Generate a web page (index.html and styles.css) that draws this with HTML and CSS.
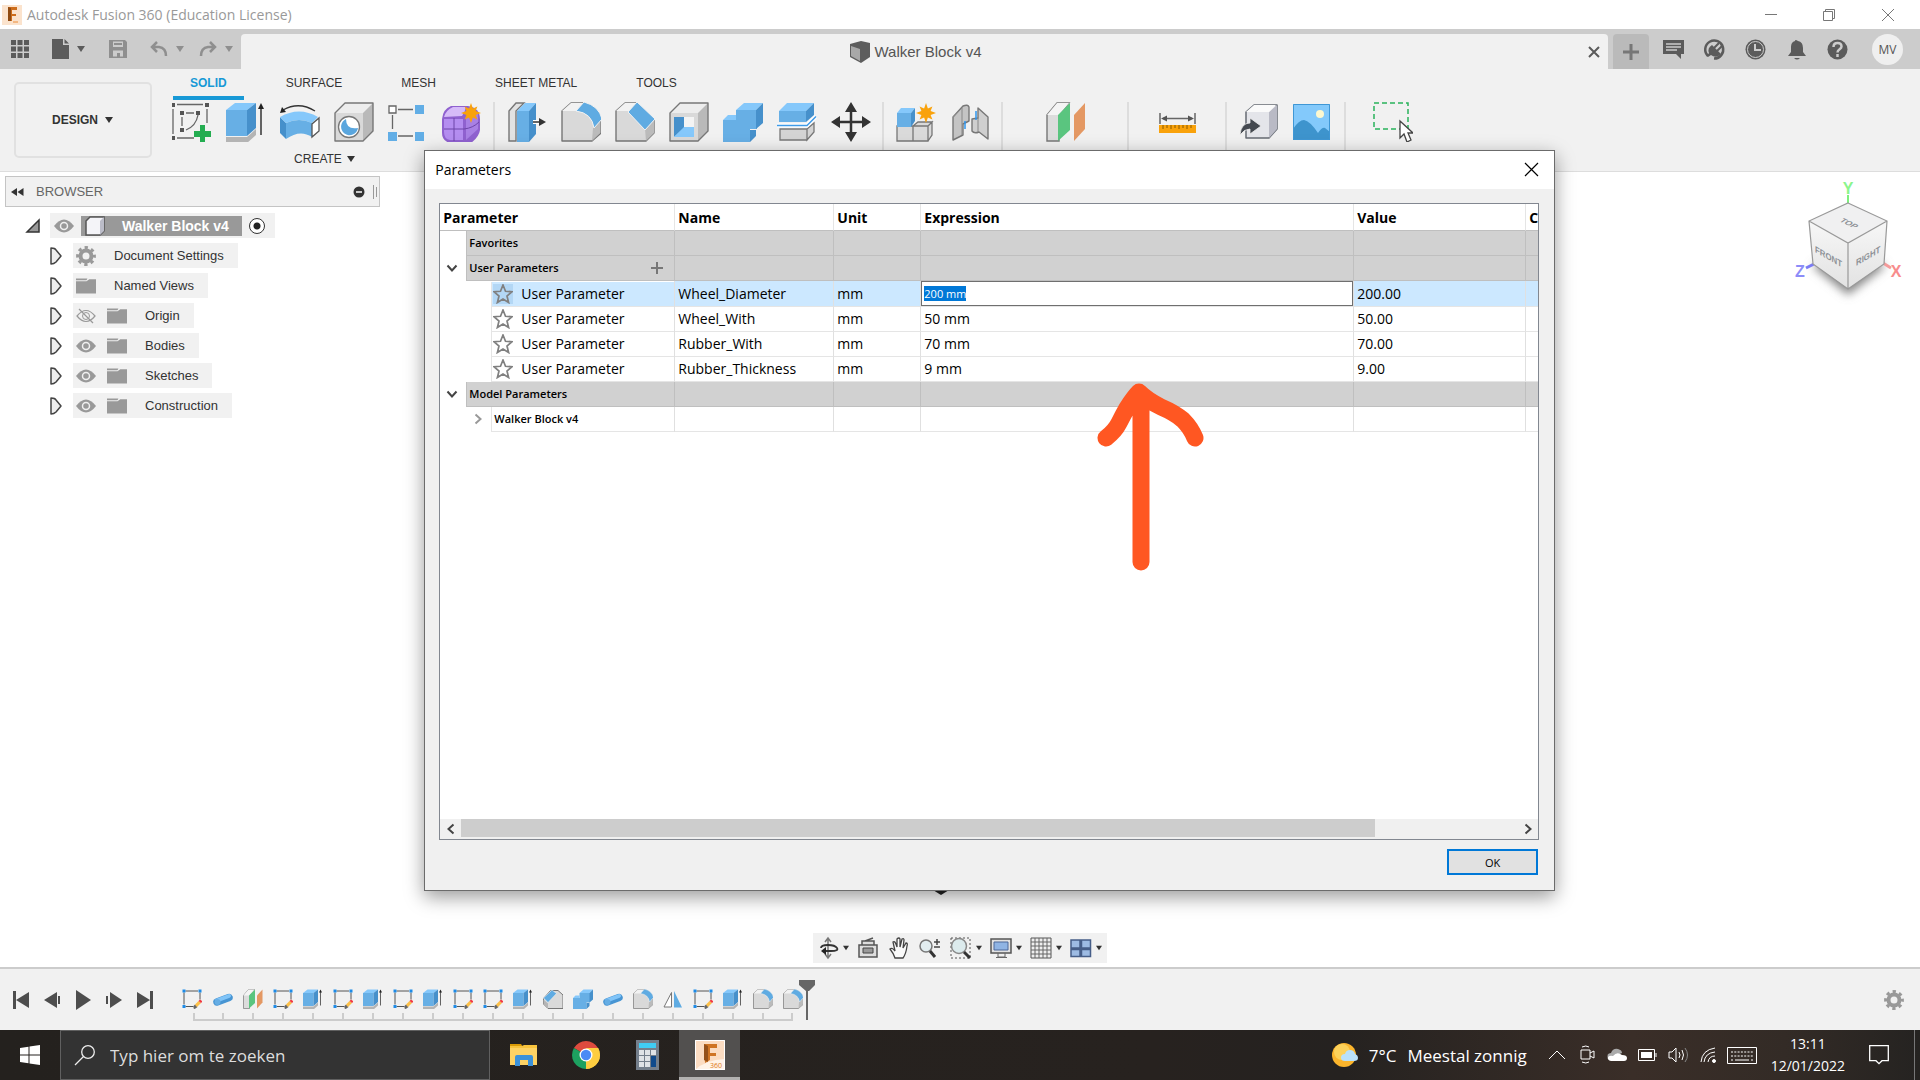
FILE: index.html
```html
<!DOCTYPE html>
<html lang="en">
<head>
  <meta charset="UTF-8" />
  <meta name="viewport" content="width=device-width, initial-scale=1.0"/>
  <title>Autodesk Fusion 360 (Education License)</title>
  <link rel="stylesheet" href="styles.css">
</head>
<body>
  <!-- shared icons -->
  <svg class="defs" aria-hidden="true">
    <symbol id="caret" viewBox="0 0 10 8"><path d="M1 1h8L5 7z" fill="currentColor"/></symbol>
    <symbol id="burst" viewBox="-10 -10 20 20"><path d="M0-10 1.900-4.600 6.400-6.400 4.600-1.900 10 0 4.600 1.900 6.400 6.400 1.900 4.600 0 10-1.900 4.600-6.400 6.400-4.600 1.900-10 0-4.600-1.900-6.400-6.400-1.900-4.600z" fill="#f9a20b"/></symbol>
    <symbol id="sketch-new" viewBox="0 0 40 40">
      <path d="M5 2.500h26M1 7v25M5 36h17M35 7v14M10 15v9M14 11h8M26 13q-2 11-12 15" fill="none" stroke="#666" stroke-width="1.300"/>
      <path d="M-1 1h4v4h-4zM33 1h4v4h-4zM-1 34h4v4h-4zM8 9h4v4H8zM24 9h4v4h-4zM8 26h4v4H8z" fill="#555"/>
      <path d="M28 23h5v6h6v6h-6v6h-5v-6h-6v-6h6z" fill="#24ad51"/>
    </symbol>
    <symbol id="extrude" viewBox="0 0 40 40">
      <path d="M0 35h21l9-8v6l-9 8H0z" fill="#b4b4b4"/>
      <path d="M0 8h21v26H0z" fill="#67afe5"/><path d="M0 8l9-7h21l-9 7z" fill="#85c8fb"/><path d="M21 8l9-7v25l-9 8z" fill="#4690cb"/>
      <path d="M35 6v27" stroke="#333" stroke-width="1.500"/><path d="M32 7l3-6 3 6z" fill="#222"/>
    </symbol>
    <symbol id="revolve" viewBox="0 0 40 40">
      <path d="M0 15l6 6v16l-6-6z" fill="#4690cb"/><path d="M0 15Q19 4 38 15l-6 6Q19 15 6 21z" fill="#85c8fb"/><path d="M6 21q13-6 26 0v14q-12-8-26 2z" fill="#67afe5"/>
      <path d="M32 22l7-6v13l-7 6z" fill="#fff" stroke="#555" stroke-width="1.300"/>
      <path d="M35 9Q19-1 3 8" fill="none" stroke="#333" stroke-width="1.300"/><path d="M0 11l2-6 4 5z" fill="#222"/>
    </symbol>
    <symbol id="cube-gray" viewBox="0 0 40 40">
      <path d="M1 11h28v28H1z" fill="#d9d9d9"/><path d="M1 11l10-10h28L29 11z" fill="#ededed"/><path d="M29 11L39 1v28L29 39z" fill="#b9b9b9"/>
      <path d="M1 11l10-10h28v28L29 39H1z" fill="none" stroke="#777" stroke-width="1.400" stroke-linejoin="round"/>
    </symbol>
    <symbol id="hole" viewBox="0 0 40 40">
      <use href="#cube-gray"/><circle cx="15" cy="25" r="10.500" fill="#fff" stroke="#777" stroke-width="1.300"/><path d="M12 17a8.500 8.500 0 1 0 12 9q-12 2-12-9z" fill="#5aa6de"/>
    </symbol>
    <symbol id="pattern" viewBox="0 0 40 40">
      <path d="M10 7.500h15M4.500 13v14M10 34h15" stroke="#666" stroke-width="1.300"/>
      <path d="M1 4h7v7H1z" fill="#fff" stroke="#666" stroke-width="1.300"/>
      <path d="M27 3h9v9h-9zM0 30h9v9H0zM27 30h9v9h-9z" fill="#62aee6"/>
    </symbol>
    <symbol id="form" viewBox="0 0 40 40">
      <path d="M0 17Q1 7 9 4h17q12 2 12 13v11q-1 7-9 13H8Q0 39 0 31z" fill="#8f61cf"/>
      <path d="M2 15Q4 8 11 5h13q-1 5-4 9z" fill="#d6bbf8"/><path d="M2 17h19v21H8q-6-1-6-8z" fill="#b48df0"/><path d="M24 16l12-5v16l-12 11z" fill="#a880e4"/>
      <path d="M12 16v23M2 27h20q9-1 15-7" stroke="#6d45a8" stroke-width="1" fill="none"/>
      <use href="#burst" x="19" y="1" width="20" height="20"/>
    </symbol>
    <symbol id="presspull" viewBox="0 0 40 40">
      <path d="M2 9l7-8h8L9 9v30H2z" fill="#e2e2e2" stroke="#777" stroke-width="1.400"/>
      <path d="M10 9h12v31H10z" fill="#67afe5"/><path d="M10 9l8-8h11l-7 8z" fill="#85c8fb"/><path d="M22 9l7-8v31l-7 8z" fill="#4690cb"/>
      <path d="M26 20h8" stroke="#fff" stroke-width="4"/><path d="M26 20h8" stroke="#333" stroke-width="1.500"/><path d="M32 16l7 4-7 4z" fill="#333"/>
    </symbol>
    <symbol id="fillet" viewBox="0 0 40 40">
      <path d="M1 9l9-8h12q16 4 18 17v13l-9 8H1z" fill="#d9d9d9" stroke="#777" stroke-width="1.400" stroke-linejoin="round"/>
      <path d="M1 9l9-8h12l-6 8z" fill="#f2f2f2"/><path d="M32 26l7-8v13l-8 8z" fill="#bbb"/>
      <path d="M15 9l8-9q15 4 18 17l-8 9Q31 11 15 9z" fill="#5fabe2" stroke="#f2f2f2" stroke-width="1"/>
    </symbol>
    <symbol id="chamfer" viewBox="0 0 40 40">
      <path d="M1 9l9-8h12l17 17v13l-8 8H1z" fill="#d9d9d9" stroke="#777" stroke-width="1.400" stroke-linejoin="round"/>
      <path d="M1 9l9-8h12l-8 8z" fill="#f2f2f2"/><path d="M30 27l9-9v13l-8 8z" fill="#bbb"/>
      <path d="M13 10l9-10 18 17-10 11z" fill="#5fabe2" stroke="#f2f2f2" stroke-width="1"/>
    </symbol>
    <symbol id="draft" viewBox="0 0 40 40">
      <path d="M15 3h15l10 9v27H10l-9-9V19z" fill="#dadada" stroke="#777" stroke-width="2" stroke-linejoin="round"/>
      <path d="M1 21l9 8v10l-9-9z" fill="#b5b5b5"/><path d="M1 18L18 2l9 7L10 27z" fill="#5fabe2" stroke="#f2f2f2"/>
    </symbol>
    <symbol id="shell" viewBox="0 0 40 40">
      <use href="#cube-gray"/><path d="M5 15h20v20H5z" fill="#e9e9e9"/><path d="M5 15h10v11L5 35z" fill="#4690cb"/><path d="M5 35l10-10h10v10z" fill="#85c8fb"/><path d="M15 15h10v10H15z" fill="#f4f4f4"/>
    </symbol>
    <symbol id="combine" viewBox="0 0 40 40">
      <path d="M0 18h13V8h21v19h-7v13H0z" fill="#67afe5"/><path d="M0 18l5-5h8v5zM13 8l8-7h19l-7 7z" fill="#85c8fb"/><path d="M33 8l7-7v20l-7 6zM27 28h6v6l-6 6z" fill="#4690cb"/>
    </symbol>
    <symbol id="split" viewBox="0 0 40 40">
      <path d="M3 27h27v11H3zM30 27l7-6v9l-7 8z" fill="#d4d4d4" stroke="#777" stroke-width="1.300"/>
      <path d="M2 9h27v11H2z" fill="#67afe5"/><path d="M2 9l8-8h27l-8 8z" fill="#85c8fb"/><path d="M29 9l8-8v12l-8 7z" fill="#4690cb"/>
      <path d="M0 23.500h30l9-9" fill="none" stroke="#fff" stroke-width="4"/><path d="M0 23.500h30l9-9" fill="none" stroke="#3f9be8" stroke-width="1.500"/>
    </symbol>
    <symbol id="move" viewBox="0 0 40 40">
      <path d="M20 6v28M6 20h28" stroke="#333" stroke-width="2.500"/>
      <path d="M20 0l6 10H14zM20 40l6-10H14zM0 20l9-6v12zM40 20l-9-6v12z" fill="#333"/>
    </symbol>
    <symbol id="component" viewBox="0 0 40 40">
      <path d="M1 24h16v15H1zM17 24l5-4h14l-4 4v15H17M17 24h15l4-4v13l-4 6" fill="#dadada" stroke="#777" stroke-width="1.300"/>
      <path d="M1 11h14v14H1z" fill="#67afe5"/><path d="M1 11l4-5h14l-4 5z" fill="#85c8fb"/><path d="M15 11l4-5v13l-4 6z" fill="#4690cb"/>
      <use href="#burst" x="20" y="1" width="20" height="20"/>
    </symbol>
    <symbol id="joint" viewBox="0 0 40 40">
      <path d="M3 15L13 4q5-2 6 1v14l-6 3v11L3 38z" fill="#c4c4c4" stroke="#777" stroke-width="1.400" stroke-linejoin="round"/>
      <path d="M12 6v27M3 15l9-9" stroke="#888" fill="none"/>
      <path d="M38 37l-9-7q-5 2-7-1V17l6-1V6l10 9z" fill="#cfcfcf" stroke="#777" stroke-width="1.400" stroke-linejoin="round"/><path d="M28 16v14" stroke="#888"/>
      <path d="M15 19v8M26 9v9" stroke="#2f96ee" stroke-width="1.500"/>
    </symbol>
    <symbol id="plane" viewBox="0 0 40 40">
      <path d="M1 13L11 1h12L13 13v26H1z" fill="#dcdcdc" stroke="#777" stroke-width="1.400"/><path d="M1 13L11 1h12L13 13z" fill="#f4f4f4"/>
      <path d="M12 13L24 1v27L12 39z" fill="#5ac57f"/><path d="M28 13L39 1v26L28 39z" fill="#e49863"/>
    </symbol>
    <symbol id="measure" viewBox="0 0 40 40">
      <path d="M3 11v11M38 11v11M6 16.500h29" stroke="#666" stroke-width="1.500"/><path d="M4 16.500l6-3v6zM37 16.500l-6-3v6z" fill="#555"/>
      <path d="M2 23h37v8H2z" fill="#f9a20b"/><path d="M6 23v4M10 23v3M14 23v4M18 23v3M22 23v4M26 23v3M30 23v4M34 23v3" stroke="#8a5a00"/>
    </symbol>
    <symbol id="insert" viewBox="0 0 40 40">
      <path d="M7 10l8-7h23v24l-8 9H7z" fill="#e4e5ea" stroke="#666b73" stroke-width="1.500" stroke-linejoin="round"/><path d="M30 10l8-7v24l-8 9z" fill="#b9bac5"/><path d="M7 10l8-7h22l-7 7z" fill="#fafafa"/>
      <path d="M1 33q1-12 10-12v-5l11 8-11 8v-5q-6 0-10 6z" fill="#444950" stroke="#eee" stroke-width=".8"/>
    </symbol>
    <symbol id="picture" viewBox="0 0 40 40">
      <path d="M0 2h37v36H0z" fill="#83c9fb"/><path d="M0 27q6-9 11-9 6 1 14 13 4-6 7-5l5 4v8H0z" fill="#3e94cd"/><circle cx="27" cy="12" r="4" fill="#fdf8cf"/><path d="M.5 2.500h36v35H.5z" fill="none" stroke="#3f97d5"/>
    </symbol>
    <symbol id="select" viewBox="0 0 40 40">
      <path d="M1 1h34v26H1z" fill="none" stroke="#29b25b" stroke-width="1.500" stroke-dasharray="5 3"/>
      <path d="M27 19v17l4-4 3 8 4-2-3-7h5z" fill="#fff" stroke="#444" stroke-width="1.300"/>
    </symbol>
    <symbol id="sketch" viewBox="0 0 40 40">
      <path d="M7 4h25M4 7v24M36 7v14M7 35h16" stroke="#555" stroke-width="2"/>
      <path d="M1 1h6v6H1zM33 1h6v6h-6zM1 32h6v6H1z" fill="#1c8be8"/><path d="M23 34l3-3 5 5-4 3q-3 2-4-1z" fill="#666"/>
      <path d="M26 31l7-7 5 4-8 8z" fill="#fcc04a"/><path d="M33 24l3-3 5 4-3 3z" fill="#f03a42"/>
    </symbol>
    <symbol id="cylinder" viewBox="0 0 40 40">
      <path d="M8 26L32 17" stroke="#4795d3" stroke-width="15" stroke-linecap="round"/><path d="M8 23L32 14" stroke="#80c4f8" stroke-width="8" stroke-linecap="round"/><circle cx="9" cy="26" r="6" fill="#65ade4"/>
    </symbol>
    <symbol id="mirror" viewBox="0 0 40 40"><path d="M2 36L17 7v29z" fill="#fff" stroke="#777" stroke-width="2"/><path d="M22 4l16 33H22z" fill="#5fabe2"/></symbol>
    <symbol id="gear" viewBox="0 0 20 20">
      <circle cx="10" cy="10" r="5.500" fill="none" stroke="#999" stroke-width="4"/><circle cx="10" cy="10" r="8.400" fill="none" stroke="#999" stroke-width="3" stroke-dasharray="3.300 3.297" stroke-dashoffset="1.650"/>
    </symbol>
    <symbol id="eye" viewBox="0 0 20 20"><path d="M0 10q10-13 20 0-10 13-20 0z" fill="#999"/><circle cx="10" cy="10" r="3.500" fill="none" stroke="#f0f0f0" stroke-width="1.500"/></symbol>
    <symbol id="eye-off" viewBox="0 0 20 20"><path d="M1 10q9-11 18 0-9 11-18 0z" fill="none" stroke="#999" stroke-width="1.200"/><circle cx="10" cy="10" r="3.500" fill="none" stroke="#999"/><path d="M3 3l14 14" stroke="#999" stroke-width="1.200"/></symbol>
    <symbol id="folder" viewBox="0 0 21 20"><path d="M0 2h12l-1 2H0zM0 5h11l3-2h7v15H0z" fill="#999"/></symbol>
    <symbol id="expand" viewBox="0 0 12 18"><path d="M1 1q4 0 5 2l5 6-5 6q-2 2-5 2z" fill="#eee" stroke="#444" stroke-width="1.500" stroke-linejoin="round"/></symbol>
    <symbol id="star" viewBox="0 0 20 20"><path d="M10 1l2.500 6.300 6.500.4-5 4.300 1.600 6.500L10 15l-5.600 3.500L6 12 1 7.700l6.500-.4z" fill="none" stroke="#808080" stroke-width="1.700"/></symbol>
    <symbol id="chevron" viewBox="0 0 12 12"><path d="M1.500 3.500L6 8.500l4.500-5" fill="none" stroke="currentColor" stroke-width="2"/></symbol>
  </svg>

  <header class="titlebar">
    <svg class="app-icon" viewBox="0 0 20 20"><path d="M0 0h20v20H0z" fill="#fbe3cd"/><path d="M6 2h9v3h-5v4h4v2h-4v5H6z" fill="#cd6d1b"/><path d="M6 2l3 1v13H6z" fill="#8f4b13"/><path d="M11 17h5" stroke="#f0a868" stroke-width="1.500"/></svg>
    <span class="app-title">Autodesk Fusion 360 (Education License)</span>
    <div class="window-buttons">
      <button aria-label="Minimize"><svg viewBox="0 0 12 12"><path d="M0 5.500h12"/></svg></button>
      <button aria-label="Restore"><svg viewBox="0 0 12 12"><path d="M.5 2.500h9v9h-9zM2.500 2V.5h9v9H10"/></svg></button>
      <button aria-label="Close"><svg viewBox="0 0 12 12"><path d="M0 0l12 12M12 0L0 12"/></svg></button>
    </div>
  </header>

  <div class="tabbar">
    <div class="quick">
      <button aria-label="Data panel"><svg width="18" height="18" viewBox="0 0 18 18"><path d="M0 0h5v5H0zM6.500 0h5v5h-5zM13 0h5v5h-5zM0 6.500h5v5H0zM6.500 6.500h5v5h-5zM13 6.500h5v5h-5zM0 13h5v5H0zM6.500 13h5v5h-5zM13 13h5v5h-5z" fill="#5b5b5b"/></svg></button>
      <button class="menu" aria-label="File"><svg width="17" height="20" viewBox="0 0 17 20"><path d="M0 0h11v6h6v14H0zM12.500 0L17 4.500h-4.500z" fill="#5b5b5b"/></svg><svg class="caret"><use href="#caret"/></svg></button>
      <button class="dim" aria-label="Save"><svg width="18" height="18" viewBox="0 0 18 18"><path d="M0 0h16l2 2v16H0zM4 1.500V7h10V1.500zM4 10.500v6h10v-6z" fill-rule="evenodd" fill="#8f8f8f"/><path d="M5 3h8v2H5zM8 13h3v4H8z" fill="#8f8f8f"/></svg></button>
      <button class="menu dim" aria-label="Undo"><svg width="18" height="18" viewBox="0 0 18 18"><path d="M7 2L2 7l5 5M2 7h7q7 1 7 9" fill="none" stroke="#8f8f8f" stroke-width="2.500"/></svg><svg class="caret"><use href="#caret"/></svg></button>
      <button class="menu dim" aria-label="Redo"><svg width="18" height="18" viewBox="0 0 18 18"><path d="M11 2l5 5-5 5M16 7H9q-7 1-7 9" fill="none" stroke="#8f8f8f" stroke-width="2.500"/></svg><svg class="caret"><use href="#caret"/></svg></button>
    </div>
    <div class="doc-tab">
      <div class="doc-name">
        <svg width="20" height="22" viewBox="0 0 20 22"><path d="M0 3l11-3 9 2v14l-9 6-11-6z" fill="#5d5d5d"/><path d="M1 5l9 3v12l-9-5z" fill="#a8a8a8"/></svg>
        <span>Walker Block v4</span>
      </div>
      <button aria-label="Close document"><svg width="12" height="12" viewBox="0 0 12 12"><path d="M1 1l10 10M11 1L1 11" stroke="#5b5b5b" stroke-width="2"/></svg></button>
    </div>
    <button class="new-tab" aria-label="New design"><svg width="16" height="16" viewBox="0 0 16 16"><path d="M8 0v16M0 8h16" stroke="#777" stroke-width="3"/></svg></button>
    <div class="account">
      <button aria-label="Comments"><svg viewBox="0 0 21 21"><path d="M0 1h21v14h-3v5l-5-5H0z" fill="#5b5b5b"/><path d="M3 5h15M3 8h15M3 11h11" stroke="#ccc" stroke-width="1.500"/></svg></button>
      <button aria-label="Extensions"><svg viewBox="0 0 21 21"><path d="M4 17a9 9 0 1 1 6 2.500" fill="none" stroke="#5b5b5b" stroke-width="2.500"/><path d="M8 6l9 9q-5 5-10 1l-3 2-1-1 2-3Q3 9 8 6z" fill="#5b5b5b"/><path d="M10 9l5-5M13 12l5-5" stroke="#5b5b5b" stroke-width="2"/></svg></button>
      <button aria-label="Job status"><svg viewBox="0 0 21 21"><circle cx="10.500" cy="10.500" r="10" fill="#5b5b5b"/><circle cx="10.500" cy="10.500" r="8" fill="none" stroke="#ccc"/><path d="M10 5v6h6" fill="none" stroke="#ccc" stroke-width="2"/></svg></button>
      <button aria-label="Notifications"><svg viewBox="0 0 21 21"><path d="M9 2q0-2 3 0 5 1 5 7v4l3 4H2l3-4V8q0-5 4-6zM8 19h6q-3 3-6 0z" fill="#5b5b5b"/></svg></button>
      <button aria-label="Help"><svg viewBox="0 0 21 21"><circle cx="10.500" cy="10.500" r="10" fill="#5b5b5b"/><path d="M6.500 8q0-4 4-4t4 3.500c0 3-4 2.500-4 6M10.500 15v3" fill="none" stroke="#ccc" stroke-width="2.500"/></svg></button>
      <button class="avatar">MV</button>
    </div>
  </div>

  <section class="ribbon">
    <button class="workspace">DESIGN <svg class="caret"><use href="#caret"/></svg></button>
    <div class="ribbon-main">
      <nav class="ribbon-tabs">
        <button class="active">SOLID</button>
        <button>SURFACE</button>
        <button>MESH</button>
        <button>SHEET METAL</button>
        <button>TOOLS</button>
      </nav>
      <div class="tools">
        <div class="group">
          <div class="icons">
            <button aria-label="Create sketch"><svg><use href="#sketch-new"/></svg></button>
            <button aria-label="Extrude"><svg><use href="#extrude"/></svg></button>
            <button aria-label="Revolve"><svg><use href="#revolve"/></svg></button>
            <button aria-label="Hole"><svg><use href="#hole"/></svg></button>
            <button aria-label="Pattern"><svg><use href="#pattern"/></svg></button>
            <button aria-label="Create form"><svg><use href="#form"/></svg></button>
          </div>
          <button class="group-label">CREATE <svg class="caret"><use href="#caret"/></svg></button>
        </div>
        <div class="group">
          <div class="icons">
            <button aria-label="Press pull"><svg><use href="#presspull"/></svg></button>
            <button aria-label="Fillet"><svg><use href="#fillet"/></svg></button>
            <button aria-label="Chamfer"><svg><use href="#chamfer"/></svg></button>
            <button aria-label="Shell"><svg><use href="#shell"/></svg></button>
            <button aria-label="Combine"><svg><use href="#combine"/></svg></button>
            <button aria-label="Split body"><svg><use href="#split"/></svg></button>
            <button aria-label="Move"><svg><use href="#move"/></svg></button>
          </div>
        </div>
        <div class="group">
          <div class="icons">
            <button aria-label="New component"><svg><use href="#component"/></svg></button>
            <button aria-label="Joint"><svg><use href="#joint"/></svg></button>
          </div>
        </div>
        <div class="group wide">
          <div class="icons"><button aria-label="Offset plane"><svg><use href="#plane"/></svg></button></div>
        </div>
        <div class="group mid">
          <div class="icons"><button aria-label="Measure"><svg><use href="#measure"/></svg></button></div>
        </div>
        <div class="group">
          <div class="icons">
            <button aria-label="Insert derive"><svg><use href="#insert"/></svg></button>
            <button aria-label="Canvas"><svg><use href="#picture"/></svg></button>
          </div>
        </div>
        <div class="group mid last">
          <div class="icons"><button aria-label="Select"><svg><use href="#select"/></svg></button></div>
        </div>
      </div>
    </div>
  </section>

  <main class="canvas">
    <div class="canvas-top">
      <aside class="browser">
        <div class="browser-head">
          <svg width="13" height="8" viewBox="0 0 13 8"><path d="M6 0v8L0 4zM12.500 0v8l-6-4z" fill="#333"/></svg>
          <span>BROWSER</span>
          <svg width="24" height="14" viewBox="0 0 24 14"><circle cx="6" cy="7" r="5.500" fill="#333"/><path d="M3 7h6" stroke="#fff" stroke-width="1.500"/><path d="M20.500 0v14M23.500 2v10" stroke="#999"/></svg>
        </div>
        <div class="root-row">
          <svg width="14" height="14" viewBox="0 0 14 14"><path d="M13 1v12H1z" fill="#999" stroke="#333" stroke-width="1.500"/></svg>
          <div class="row-box root-box">
            <svg class="ic"><use href="#eye"/></svg>
            <span class="root-name">
              <svg width="20" height="20" viewBox="0 0 20 20"><path d="M1 5l4-4h14v14l-4 4H1z" fill="#f4f4f8" stroke="#555" stroke-width="1.500"/><path d="M15 5l4-4v14l-4 4z" fill="#bbbcc8"/></svg>
              Walker Block v4
            </span>
            <input type="radio" name="active-component" aria-label="Activate component" checked>
          </div>
        </div>
        <ul class="tree">
          <li><svg class="twist"><use href="#expand"/></svg><div class="row-box"><svg class="ic"><use href="#gear"/></svg><span>Document Settings</span></div></li>
          <li><svg class="twist"><use href="#expand"/></svg><div class="row-box"><svg class="ic"><use href="#folder"/></svg><span>Named Views</span></div></li>
          <li><svg class="twist"><use href="#expand"/></svg><div class="row-box"><svg class="ic"><use href="#eye-off"/></svg><svg class="ic"><use href="#folder"/></svg><span>Origin</span></div></li>
          <li><svg class="twist"><use href="#expand"/></svg><div class="row-box"><svg class="ic"><use href="#eye"/></svg><svg class="ic"><use href="#folder"/></svg><span>Bodies</span></div></li>
          <li><svg class="twist"><use href="#expand"/></svg><div class="row-box"><svg class="ic"><use href="#eye"/></svg><svg class="ic"><use href="#folder"/></svg><span>Sketches</span></div></li>
          <li><svg class="twist"><use href="#expand"/></svg><div class="row-box"><svg class="ic"><use href="#eye"/></svg><svg class="ic"><use href="#folder"/></svg><span>Construction</span></div></li>
        </ul>
      </aside>

      <svg class="viewcube" viewBox="0 0 120 134">
        <defs>
          <filter id="soft" x="-30%" y="-30%" width="160%" height="160%"><feGaussianBlur stdDeviation="5"/></filter>
          <linearGradient id="face" x1="0" y1="0" x2="0" y2="1"><stop offset="0" stop-color="#f7f7f7"/><stop offset="1" stop-color="#e2e2e2"/></linearGradient>
        </defs>
        <path d="M24 90l36-16 38 16-38 29z" fill="#888" filter="url(#soft)"/>
        <path d="M60 19v8" stroke="#7df07d" stroke-width="2"/><path d="M18 92l8-4" stroke="#7a7af5" stroke-width="3"/><path d="M95 87l8 5" stroke="#f59a9a" stroke-width="3"/>
        <path d="M60 27l39 18-39 22-39-22z" fill="#f0f0f1"/>
        <path d="M21 45l39 22v46L25 88z" fill="url(#face)"/><path d="M99 45L60 67v46l36-25z" fill="url(#face)"/>
        <path d="M60 27l39 18-3 43-36 25-35-25-4-43zM21 45l39 22 39-22M60 67v46" fill="none" stroke="#999" stroke-width="1.200"/>
        <g class="cube-text">
          <text transform="matrix(.85 .42 -.75 .5 51 45)">TOP</text>
          <text transform="matrix(.87 .5 0 1 27 76)">FRONT</text>
          <text transform="matrix(.87 -.5 0 1 68 90)">RIGHT</text>
        </g>
        <g class="axis">
          <text x="60" y="18" fill="#8bf58b">Y</text><text x="12" y="101" fill="#8c8cf8">Z</text><text x="108" y="101" fill="#f88c8c">X</text>
        </g>
      </svg>
    </div>

    <div class="navbar">
      <button aria-label="Orbit"><svg viewBox="0 0 22 22"><path d="M11 1v20M8 5l3-4 3 4M8 17l3 4 3-4" fill="none" stroke="#777" stroke-width="1.500"/><path d="M4 11q0-3 7-3t9 3-6 3H6" fill="none" stroke="#333" stroke-width="1.800"/><path d="M9 10v8l-5-4z" fill="#222"/></svg></button><svg class="caret"><use href="#caret"/></svg>
      <button aria-label="Look at"><svg viewBox="0 0 22 22"><path d="M2 8h18v12H2zM5 8V4h12v4M8 4l8-3" fill="#ddd" stroke="#555" stroke-width="1.500"/><path d="M6 11h10v5H6z" fill="#999" stroke="#444"/></svg></button>
      <button aria-label="Pan"><svg viewBox="0 0 22 22"><path d="M7 21q-1-4-5-9 2-2 5 2L5 5q2-2 4 5V2q2-2 3 0v8l2-8q2-1 2 1l-1 8 3-5q2 0 1 3-1 8-4 12z" fill="#fafafa" stroke="#444" stroke-width="1.300"/></svg></button>
      <button aria-label="Zoom"><svg viewBox="0 0 22 22"><circle cx="7" cy="9" r="6" fill="#e2edf0" stroke="#777" stroke-width="1.500"/><path d="M11 14l5 6" stroke="#333" stroke-width="3"/><path d="M18 2v6M15 5h6M15 10h6" stroke="#444" stroke-width="1.500"/></svg></button>
      <button aria-label="Fit"><svg viewBox="0 0 22 22"><path d="M1 1h19v20H1z" fill="none" stroke="#555" stroke-dasharray="2 2"/><circle cx="9" cy="9" r="7.500" fill="#dcebed" stroke="#888" stroke-width="1.500"/><path d="M14 15l6 6" stroke="#333" stroke-width="3"/></svg></button><svg class="caret"><use href="#caret"/></svg>
      <button aria-label="Display settings"><svg viewBox="0 0 22 22"><path d="M1 2h20v14H1z" fill="#e2e2e2" stroke="#555" stroke-width="1.500"/><path d="M4 5h14v8H4z" fill="#8fb4e4" stroke="#4c689a"/><path d="M8 16v4h7v-4M6 20.500h11" stroke="#666" fill="none"/></svg></button><svg class="caret"><use href="#caret"/></svg>
      <button aria-label="Grid and snaps"><svg viewBox="0 0 22 22"><path d="M1 1h20v20H1z" fill="#eee" stroke="#555"/><path d="M5 1v20M9 1v20M13 1v20M17 1v20M1 5h20M1 9h20M1 13h20M1 17h20" stroke="#666"/></svg></button><svg class="caret"><use href="#caret"/></svg>
      <button aria-label="Viewports"><svg viewBox="0 0 22 22"><path d="M1 3h9v8H1zM11.500 3h9v8h-9zM1 12.500h9v7H1zM11.500 12.500h9v7h-9z" fill="#9dbbe3" stroke="#465e88" stroke-width="1.500"/></svg></button><svg class="caret"><use href="#caret"/></svg>
    </div>
  </main>

  <section class="timeline">
    <div class="playback">
      <button aria-label="Go to start"><svg viewBox="0 0 20 20"><path d="M2 1h3v18H2zM18 2v16L5 10z"/></svg></button>
      <button aria-label="Step back"><svg viewBox="0 0 20 20"><path d="M15 2v16L2 10zM16 6h2v8h-2z"/></svg></button>
      <button aria-label="Play"><svg viewBox="0 0 20 20"><path d="M3 0l15 10L3 20z"/></svg></button>
      <button aria-label="Step forward"><svg viewBox="0 0 20 20"><path d="M6 2v16l12-8zM2 6h2v8H2z"/></svg></button>
      <button aria-label="Go to end"><svg viewBox="0 0 20 20"><path d="M15 1h3v18h-3zM2 2v16l13-8z"/></svg></button>
    </div>
    <ol class="history" id="history"></ol>
    <svg class="marker" viewBox="0 0 16 40"><path d="M0 0h16v5l-6 6H9v29H7V11L0 5z" fill="#666"/></svg>
    <button class="timeline-settings" aria-label="Timeline settings"><svg width="20" height="20"><use href="#gear"/></svg></button>
  </section>

  <footer class="taskbar">
    <button class="start" aria-label="Start"><svg width="20" height="20" viewBox="0 0 20 20"><path d="M0 3l8.500-1.200v7.700H0zM9.500 1.600L20 0v9.500H9.500zM0 10.500h8.500v7.700L0 17zM9.500 10.500H20V20L9.500 18.400z" fill="#fff"/></svg></button>
    <label class="search">
      <svg width="20" height="20" viewBox="0 0 20 20"><circle cx="13" cy="7" r="6.300" fill="none" stroke="#eee" stroke-width="1.300"/><path d="M8.500 11.500L0 20" stroke="#eee" stroke-width="1.300"/></svg>
      <input type="text" placeholder="Typ hier om te zoeken" aria-label="Typ hier om te zoeken">
    </label>
    <div class="apps">
      <button aria-label="File Explorer"><svg width="28" height="24" viewBox="0 0 28 24"><path d="M0 1h11l2 3H0z" fill="#d99a06"/><path d="M0 3h27v19H0z" fill="#fdd264"/><path d="M0 3h12l2-1h13v3H0z" fill="#f8c33c"/><path d="M5 14q0-2 2-2h14q2 0 2 2v9h-5v-6H10v6H5z" fill="#3b91d9"/></svg></button>
      <button aria-label="Chrome"><svg width="28" height="28" viewBox="0 0 28 28"><path d="M14 14L1.900 7A14 14 0 0 1 26.100 7z" fill="#dd4b3e"/><path d="M14 14l12.100-7A14 14 0 0 1 14 28z" fill="#fecd40"/><path d="M14 14v14A14 14 0 0 1 1.900 7z" fill="#1da160"/><path d="M14 7h12.100A14 14 0 0 1 14 28l6-10z" fill="#fecd40"/><circle cx="14" cy="14" r="6.500" fill="#fff"/><circle cx="14" cy="14" r="5.200" fill="#4c8bf5"/></svg></button>
      <button aria-label="Calculator"><svg width="23" height="30" viewBox="0 0 23 30"><path d="M0 0h23v30H0z" fill="#747f8c"/><path d="M3 3h17v5H3z" fill="#40cdf5"/><path d="M3 10h5v5H3zM9 10h5v5H9zM15 10h5v5h-5zM3 16h5v5H3zM9 16h5v5H9zM3 22h5v5H3zM9 22h5v5H9z" fill="#dfe3e7"/><path d="M15 16h5v11h-5z" fill="#0f4a8c"/></svg></button>
      <button class="running" aria-label="Fusion 360"><svg width="30" height="30" viewBox="0 0 30 30"><path d="M0 0h30v30H0z" fill="#fbdcc2"/><path d="M0 30q10-10 30-11v11z" fill="#fff3e8"/><path d="M9 4h13v4h-7v5h6v3h-6v4l-5 3z" fill="#cf7424"/><path d="M9 4l4 2v16l-4-2z" fill="#94501a"/><path d="M.5.5h29v29H.5z" fill="none" stroke="#fff"/><text x="15" y="28" class="app-360">360</text></svg></button>
    </div>
    <div class="tray">
      <button class="weather">
        <svg width="26" height="24" viewBox="0 0 26 24"><circle cx="12" cy="12" r="12" fill="#fbb52c"/><circle cx="10" cy="9" r="8" fill="#fdd25a"/><path d="M13 18q-4 0-4-3.500T13 11q1-4 5-4t5 4q3 1 3 4t-4 3z" fill="#b9e1fa"/></svg>
        <span>7°C</span><span>Meestal zonnig</span>
      </button>
      <div class="tray-icons">
        <svg width="16" height="20" viewBox="0 0 16 20"><path d="M0 14l8-8 8 8"/></svg>
        <svg width="15" height="20" viewBox="0 0 15 20"><path d="M1 5h9v9H1zM10 8l4-2v7l-4-2M2 2q4-2 7 0M2 17q4 2 7 0"/></svg>
        <svg width="21" height="20" viewBox="0 0 21 20"><path d="M2 14Q0 8 5 8q2-5 7-4 4 1 4 4z" fill="#aaa" stroke="none"/><path d="M5 16q-4-1-3-4 2-2 5-1 4-5 9-1 5 0 5 3t-3 3z" fill="#fff" stroke="none"/></svg>
        <svg width="19" height="20" viewBox="0 0 19 20"><path d="M.5 4.500h16v11H.5zM18 8v4"/><path d="M3 7h11v6H3z" fill="#fff" stroke="none"/></svg>
        <svg width="21" height="20" viewBox="0 0 21 20"><path d="M1 7h3l4-4v14l-4-4H1zM11 7q2 3 0 6M14 5q3 5 0 10"/><path d="M17 3q5 7 0 14" stroke="#888"/></svg>
        <svg width="16" height="20" viewBox="0 0 16 20"><path d="M1 17Q2 5 15 3M4 17Q5 8 15 7M8 17q1-6 7-6"/><circle cx="14" cy="16" r="1.500" fill="#fff"/></svg>
        <svg width="30" height="20" viewBox="0 0 30 20"><path d="M.5 2.500h29v16H.5zM8 15h14M4 15h2M24 15h2"/><path d="M4 7h22M4 11h22" stroke-dasharray="2 1.300"/></svg>
      </div>
      <div class="clock"><span>13:11</span><span>12/01/2022</span></div>
      <button class="notify" aria-label="Action center"><svg width="20" height="20" viewBox="0 0 20 20"><path d="M.7.7h18.600v15H13l-3 3-3-3H.7z" fill="none" stroke="#fff" stroke-width="1.300"/></svg></button>
    </div>
  </footer>

  <!-- bottom tip of the model, mostly hidden by the dialog -->
  <svg class="model-tip" viewBox="0 0 16 8"><path d="M0 0h16l-8 5z" fill="#222"/></svg>

  <div class="dialog" role="dialog" aria-labelledby="dialogTitle">
    <div class="dialog-head">
      <span id="dialogTitle">Parameters</span>
      <button aria-label="Close"><svg width="13" height="13" viewBox="0 0 13 13"><path d="M0 0l13 13M13 0L0 13" stroke="#000" stroke-width="1.200"/></svg></button>
    </div>
    <div class="list">
      <table>
        <colgroup><col class="c-param"><col class="c-name"><col class="c-unit"><col><col class="c-value"><col class="c-more"></colgroup>
        <thead>
          <tr><th>Parameter</th><th>Name</th><th>Unit</th><th>Expression</th><th>Value</th><th>C</th></tr>
        </thead>
        <tbody>
          <tr class="section"><td class="tree-cell"><div class="cell l1">Favorites</div></td><td></td><td></td><td></td><td></td><td></td></tr>
          <tr class="section"><td class="tree-cell"><svg class="fold"><use href="#chevron"/></svg><div class="cell l1">User Parameters <button class="add" aria-label="Add user parameter"><svg width="12" height="12" viewBox="0 0 12 12"><path d="M6 0v12M0 6h12" stroke="#777" stroke-width="2"/></svg></button></div></td><td></td><td></td><td></td><td></td><td></td></tr>
          <tr class="selected"><td class="tree-cell"><div class="cell l2"><svg class="fav"><use href="#star"/></svg>User Parameter</div></td><td>Wheel_Diameter</td><td>mm</td><td class="edit"><input type="text" id="expression" value="200 mm" aria-label="Expression" autofocus></td><td>200.00</td><td></td></tr>
          <tr><td class="tree-cell"><div class="cell l2"><svg class="fav"><use href="#star"/></svg>User Parameter</div></td><td>Wheel_With</td><td>mm</td><td>50 mm</td><td>50.00</td><td></td></tr>
          <tr><td class="tree-cell"><div class="cell l2"><svg class="fav"><use href="#star"/></svg>User Parameter</div></td><td>Rubber_With</td><td>mm</td><td>70 mm</td><td>70.00</td><td></td></tr>
          <tr><td class="tree-cell"><div class="cell l2"><svg class="fav"><use href="#star"/></svg>User Parameter</div></td><td>Rubber_Thickness</td><td>mm</td><td>9 mm</td><td>9.00</td><td></td></tr>
          <tr class="section"><td class="tree-cell"><svg class="fold"><use href="#chevron"/></svg><div class="cell l1">Model Parameters</div></td><td></td><td></td><td></td><td></td><td></td></tr>
          <tr><td class="tree-cell"><svg class="fold closed"><use href="#chevron"/></svg><div class="cell l2 strong">Walker Block v4</div></td><td></td><td></td><td></td><td></td><td></td></tr>
        </tbody>
      </table>
      <div class="scrollbar">
        <button aria-label="Scroll left"><svg class="left"><use href="#chevron"/></svg></button>
        <div class="track"><div class="thumb"></div></div>
        <button aria-label="Scroll right"><svg class="right"><use href="#chevron"/></svg></button>
      </div>
    </div>
    <div class="dialog-foot"><button class="ok">OK</button></div>
    <svg class="arrow" viewBox="0 0 110 200"><path d="M14 56q9-7 13-15t8-15q7-11 12-16 8 8 22 15 14 6 22 13 8 8 12 18M49 15v165" fill="none" stroke="#ff5722" stroke-width="17" stroke-linecap="round" stroke-linejoin="round"/></svg>
  </div>

  <script>
    const features = ['sketch', 'cylinder', 'plane', 'sketch', 'extrude', 'sketch', 'extrude', 'sketch', 'extrude',
      'sketch', 'sketch', 'extrude', 'draft', 'combine', 'cylinder', 'fillet', 'mirror', 'sketch', 'extrude', 'fillet', 'fillet'];
    const historyList = document.getElementById('history');
    historyList.innerHTML = features.map(f => `<li><svg><use href="#${f}"/></svg></li>`).join('');

    const expression = document.getElementById('expression');
    expression.focus();
    expression.select();
  </script>
</body>
</html>
```
FILE: styles.css
```css
* { box-sizing: border-box; }
body {
  margin: 0;
  height: 100vh;
  display: flex;
  flex-direction: column;
  overflow: hidden;
  position: relative;
  background: #fff;
  color: #333;
  font-family: "Liberation Sans", Arial, sans-serif;
  font-size: 13px;
}
button {
  border: none;
  background: none;
  padding: 0;
  margin: 0;
  color: inherit;
  font: inherit;
  display: flex;
  align-items: center;
  justify-content: center;
}
svg { display: block; flex: none; overflow: visible; }
.defs { width: 0; height: 0; position: absolute; }
.caret { width: 10px; height: 8px; }

/* title bar */
.titlebar {
  height: 29px;
  display: flex;
  align-items: center;
  gap: 5px;
  padding: 0 2px;
  font-family: "Open Sans", sans-serif;
  font-size: 14px;
  color: #999;
}
.app-icon { width: 20px; height: 20px; }
.window-buttons { margin-left: auto; display: flex; }
.window-buttons button { width: 58px; height: 28px; }
.window-buttons button:last-child { width: 60px; }
.window-buttons svg { width: 12px; height: 12px; fill: none; stroke: #777; }

/* document tabs */
.tabbar {
  height: 40px;
  display: flex;
  align-items: stretch;
  background: #ccc;
}
.quick {
  width: 241px;
  display: flex;
  align-items: center;
  gap: 23px;
  padding-left: 11px;
  color: #5b5b5b;
}
.quick .menu { gap: 7px; }
.quick .dim { color: #8f8f8f; }
.quick .menu.dim + .dim { margin-left: -9px; }
.doc-tab {
  flex: 1;
  margin-top: 5px;
  display: flex;
  align-items: center;
  padding: 0 8px 0 10px;
  background: #f1f1f1;
  border-radius: 4px 4px 0 0;
  font-size: 15px;
  color: #555;
}
.doc-name { flex: 1; display: flex; align-items: center; justify-content: center; gap: 5px; padding-right: 8px; }
.new-tab {
  width: 36px;
  margin: 5px 14px 0 5px;
  background: #bababa;
  border-radius: 4px 4px 0 0;
}
.account { display: flex; align-items: center; gap: 20px; padding-right: 17px; }
.account svg { width: 21px; height: 21px; }
.account .avatar {
  width: 31px;
  height: 31px;
  margin-left: 4px;
  border-radius: 50%;
  background: #efefef;
  color: #555;
  font-family: "Open Sans", sans-serif;
  font-size: 12px;
}

/* ribbon */
.ribbon {
  height: 103px;
  display: flex;
  background: #f1f1f1;
  border-bottom: 1px solid #ddd;
}
.workspace {
  width: 138px;
  height: 76px;
  margin: 13px 20px 0 14px;
  gap: 6px;
  border: 2px solid #e1e1e1;
  border-radius: 5px;
  font-size: 12px;
  font-weight: bold;
}
.ribbon-main { flex: 1; }
.ribbon-tabs { display: flex; gap: 25px; padding-left: 1px; font-size: 12px; }
.ribbon-tabs button {
  height: 31px;
  padding: 0 17px;
  border-bottom: 4px solid transparent;
}
.ribbon-tabs .active { color: #1899d6; font-weight: bold; border-color: #1899d6; }
.tools { display: flex; padding-top: 2px; }
.group {
  height: 66px;
  padding: 0 11px 0 12px;
  border-right: 2px solid #ddd;
}
.group:first-child { padding-left: 0; }
.group.wide { padding: 0 41px 0 43px; }
.group.mid { padding: 0 28px; }
.group.last { border: none; padding-left: 27px; }
.icons { display: flex; gap: 14px; }
.icons svg { width: 40px; height: 40px; }
.group-label { margin: 10px auto 0; padding-right: 4px; gap: 4px; font-size: 12px; }

/* canvas */
.canvas { flex: 1; display: flex; flex-direction: column; justify-content: space-between; }
.canvas-top { display: flex; justify-content: space-between; padding: 4px 12px 0 5px; }
.browser { width: 375px; }
.browser-head {
  height: 31px;
  display: flex;
  align-items: center;
  gap: 12px;
  padding: 0 2px 0 5px;
  background: #f1f1f1;
  border: 1px solid #c4c4c4;
  font-size: 13px;
  color: #666;
}
.browser-head span { flex: 1; }
.root-row { display: flex; align-items: center; gap: 10px; padding: 6px 0 0 21px; }
.row-box {
  height: 25px;
  display: flex;
  align-items: center;
  gap: 11px;
  padding: 0 14px 0 3px;
  background: #f1f1f1;
}
.ic { width: 20px; height: 20px; }
.root-box { gap: 7px; padding: 0 10px 0 4px; }
.root-name {
  display: flex;
  align-items: center;
  gap: 17px;
  height: 20px;
  padding: 0 13px 0 4px;
  background: #999;
  color: #fff;
  font-size: 14px;
  font-weight: bold;
}
.root-box input {
  appearance: none;
  width: 16px;
  height: 16px;
  margin: 0;
  border: 1px solid #333;
  border-radius: 50%;
  background: radial-gradient(#222 0 3px, #fff 4px);
}
.tree { list-style: none; margin: 0; padding: 5px 0 0 45px; }
.tree li { display: flex; align-items: center; gap: 11px; height: 25px; margin-bottom: 5px; }
.tree span { padding-left: 7px; }
.twist { width: 12px; height: 18px; }
.viewcube { width: 120px; height: 134px; }
.cube-text { font-size: 9px; font-weight: bold; fill: #8d9196; }
.axis { font-size: 16px; font-weight: bold; text-anchor: middle; }

.navbar {
  height: 30px;
  display: flex;
  align-items: center;
  gap: 5px;
  align-self: center;
  margin-bottom: 4px;
  padding: 0 4px 0 2px;
  background: #f1f1f1;
}
.navbar button { width: 26px; height: 26px; }
.navbar button svg { width: 22px; height: 22px; }
.navbar .caret { width: 8px; height: 6px; margin-left: -4px; }

/* timeline */
.timeline {
  height: 63px;
  display: flex;
  align-items: flex-start;
  padding: 11px 16px 0 11px;
  background: #f1f1f1;
  border-top: 2px solid #ccc;
}
.playback { display: flex; gap: 11px; padding-top: 10px; }
.playback svg { width: 20px; height: 20px; fill: #4d4d4d; }
.history {
  list-style: none;
  display: flex;
  margin: 9px 0 0 38px;
  padding: 0;
}
.history li {
  width: 30px;
  display: flex;
  flex-direction: column;
  align-items: center;
  border-bottom: 2px solid #ccc;
}
.history li:first-child, .history li:last-child { width: 15px; }
.history li:first-child { align-items: flex-start; }
.history li:last-child { align-items: flex-end; }
.history li:first-child svg { margin-left: -11px; }
.history li:last-child svg { margin-right: -10px; }
.history svg { width: 20px; height: 20px; }
.history li::after {
  content: "";
  width: 2px;
  height: 6px;
  margin-top: 4px;
  background: #ccc;
}
.marker { width: 16px; height: 40px; margin-left: 6px; }
.timeline-settings { margin: 10px 0 0 auto; }

/* taskbar */
.taskbar {
  height: 50px;
  display: flex;
  background: linear-gradient(90deg, #24211e 0, #27221f 60%, #252220 70%, #3a2e28 85%, #332b26 93%, #252321 100%);
  color: #fff;
  font-family: "Open Sans", sans-serif;
}
.start { width: 60px; }
.search {
  width: 430px;
  display: flex;
  align-items: center;
  gap: 15px;
  padding-left: 14px;
  background: #333;
  border: 1px solid #606060;
}
.search input {
  flex: 1;
  border: none;
  outline: none;
  padding: 0;
  background: none;
  color: #fff;
  font-family: inherit;
  font-size: 17px;
}
.search input::placeholder { color: #ddd; }
.apps { display: flex; gap: 1px; padding-left: 3px; }
.apps button { width: 61px; }
.apps .running { background: #52504f; border-bottom: 3px solid #b3b2b1; padding-top: 3px; }
.app-360 { font-size: 7px; fill: #e07a20; }
.tray { margin-left: auto; display: flex; align-items: center; border-right: 1px solid #777; margin-right: 5px; }
.weather { gap: 11px; font-size: 17px; }
.tray-icons { display: flex; align-items: center; gap: 11px; margin-left: 22px; fill: none; stroke: #fff; }
.tray-icons svg:first-child { margin-right: 4px; }
.clock {
  display: flex;
  flex-direction: column;
  align-items: center;
  margin: 0 24px 0 14px;
  font-size: 14px;
  line-height: 22px;
}
.notify { margin-right: 25px; }

/* parameters dialog */
.dialog {
  position: absolute;
  top: 150px;
  bottom: 189px;
  left: 22.1%;
  right: 19%;
  display: flex;
  flex-direction: column;
  background: #f0f0f0;
  border: 1px solid #6b6b6b;
  box-shadow: 0 6px 18px rgba(0, 0, 0, 0.4);
  color: #000;
  font-family: "Open Sans", sans-serif;
  font-size: 14px;
}
.dialog-head {
  height: 38px;
  display: flex;
  align-items: center;
  justify-content: space-between;
  padding: 0 16px 2px 10px;
  background: #fff;
}
.list {
  flex: 1;
  display: flex;
  flex-direction: column;
  justify-content: space-between;
  margin: 14px 15px 0 14px;
  background: #fff;
  border: 1px solid #828790;
  overflow: hidden;
}
table { width: 100%; table-layout: fixed; border-collapse: separate; border-spacing: 0; }
.c-param { width: 235px; }
.c-name { width: 159px; }
.c-unit { width: 87px; }
.c-value { width: 172px; }
.c-more { width: 12px; }
th {
  height: 27px;
  padding: 0 3px;
  text-align: left;
  font-weight: 700;
  border-right: 1px solid #e5e5e5;
  border-bottom: 1px solid #bfbfbf;
  overflow: hidden;
}
td {
  height: 25px;
  padding: 0 3px;
  line-height: 24px;
  border-right: 1px solid #e0e0e0;
  border-bottom: 1px solid #e5e5e5;
}
th:last-child, td:last-child { border-right: none; }
.section td { background: #d1d1d1; border-color: #bfbfbf; }
.selected td { background: #cce8ff; }
td.tree-cell { position: relative; padding: 0; background: none; border-bottom: none; }
.cell {
  height: 25px;
  display: flex;
  align-items: center;
  padding-left: 2px;
  border-left: 1px solid #e5e5e5;
  border-bottom: 1px solid #e5e5e5;
}
.l1 { margin-left: 26px; font-size: 11px; font-weight: 600; }
.l2 { margin-left: 51px; padding-left: 1px; }
.strong { padding-left: 2px; font-size: 11px; font-weight: 600; }
.section .cell { background: #d1d1d1; border-color: #bfbfbf; }
.selected .cell { background: #cce8ff; }
.fold { position: absolute; left: 6px; top: 6px; width: 12px; height: 12px; color: #444; }
.fold.closed { left: 32px; color: #999; transform: rotate(-90deg); }
.fav { width: 20px; height: 20px; margin-right: 8px; }
.selected .fav { background: #b3d7f5; }
.add { margin-left: auto; margin-right: 11px; }
td.edit { padding: 0; }
.edit input {
  display: block;
  width: 100%;
  height: 25px;
  padding: 0 2px;
  border: 1px solid #6f6f6f;
  outline: none;
  background: #fff;
  font-family: inherit;
  font-size: 11px;
}
.edit input::selection { background: #0078d7; color: #fff; }
.scrollbar { display: flex; height: 20px; background: #f0f0f0; }
.scrollbar button { width: 21px; color: #444; }
.scrollbar svg { width: 12px; height: 12px; }
.left { transform: rotate(90deg); }
.right { transform: rotate(-90deg); }
.track { flex: 1; }
.thumb { width: 86.5%; height: 18px; background: #cdcdcd; }
.dialog-foot { display: flex; justify-content: flex-end; padding: 9px 16px 15px; }
.ok {
  width: 91px;
  height: 26px;
  background: #e1e1e1;
  border: 2px solid #0078d7;
  font-size: 11px;
}
/* hand-drawn pointer over the list */
.arrow { position: absolute; left: 59.1%; top: 231px; width: 110px; height: 200px; }
.model-tip { position: absolute; left: 49%; bottom: 182px; width: 16px; height: 8px; margin-left: -8px; }
```
